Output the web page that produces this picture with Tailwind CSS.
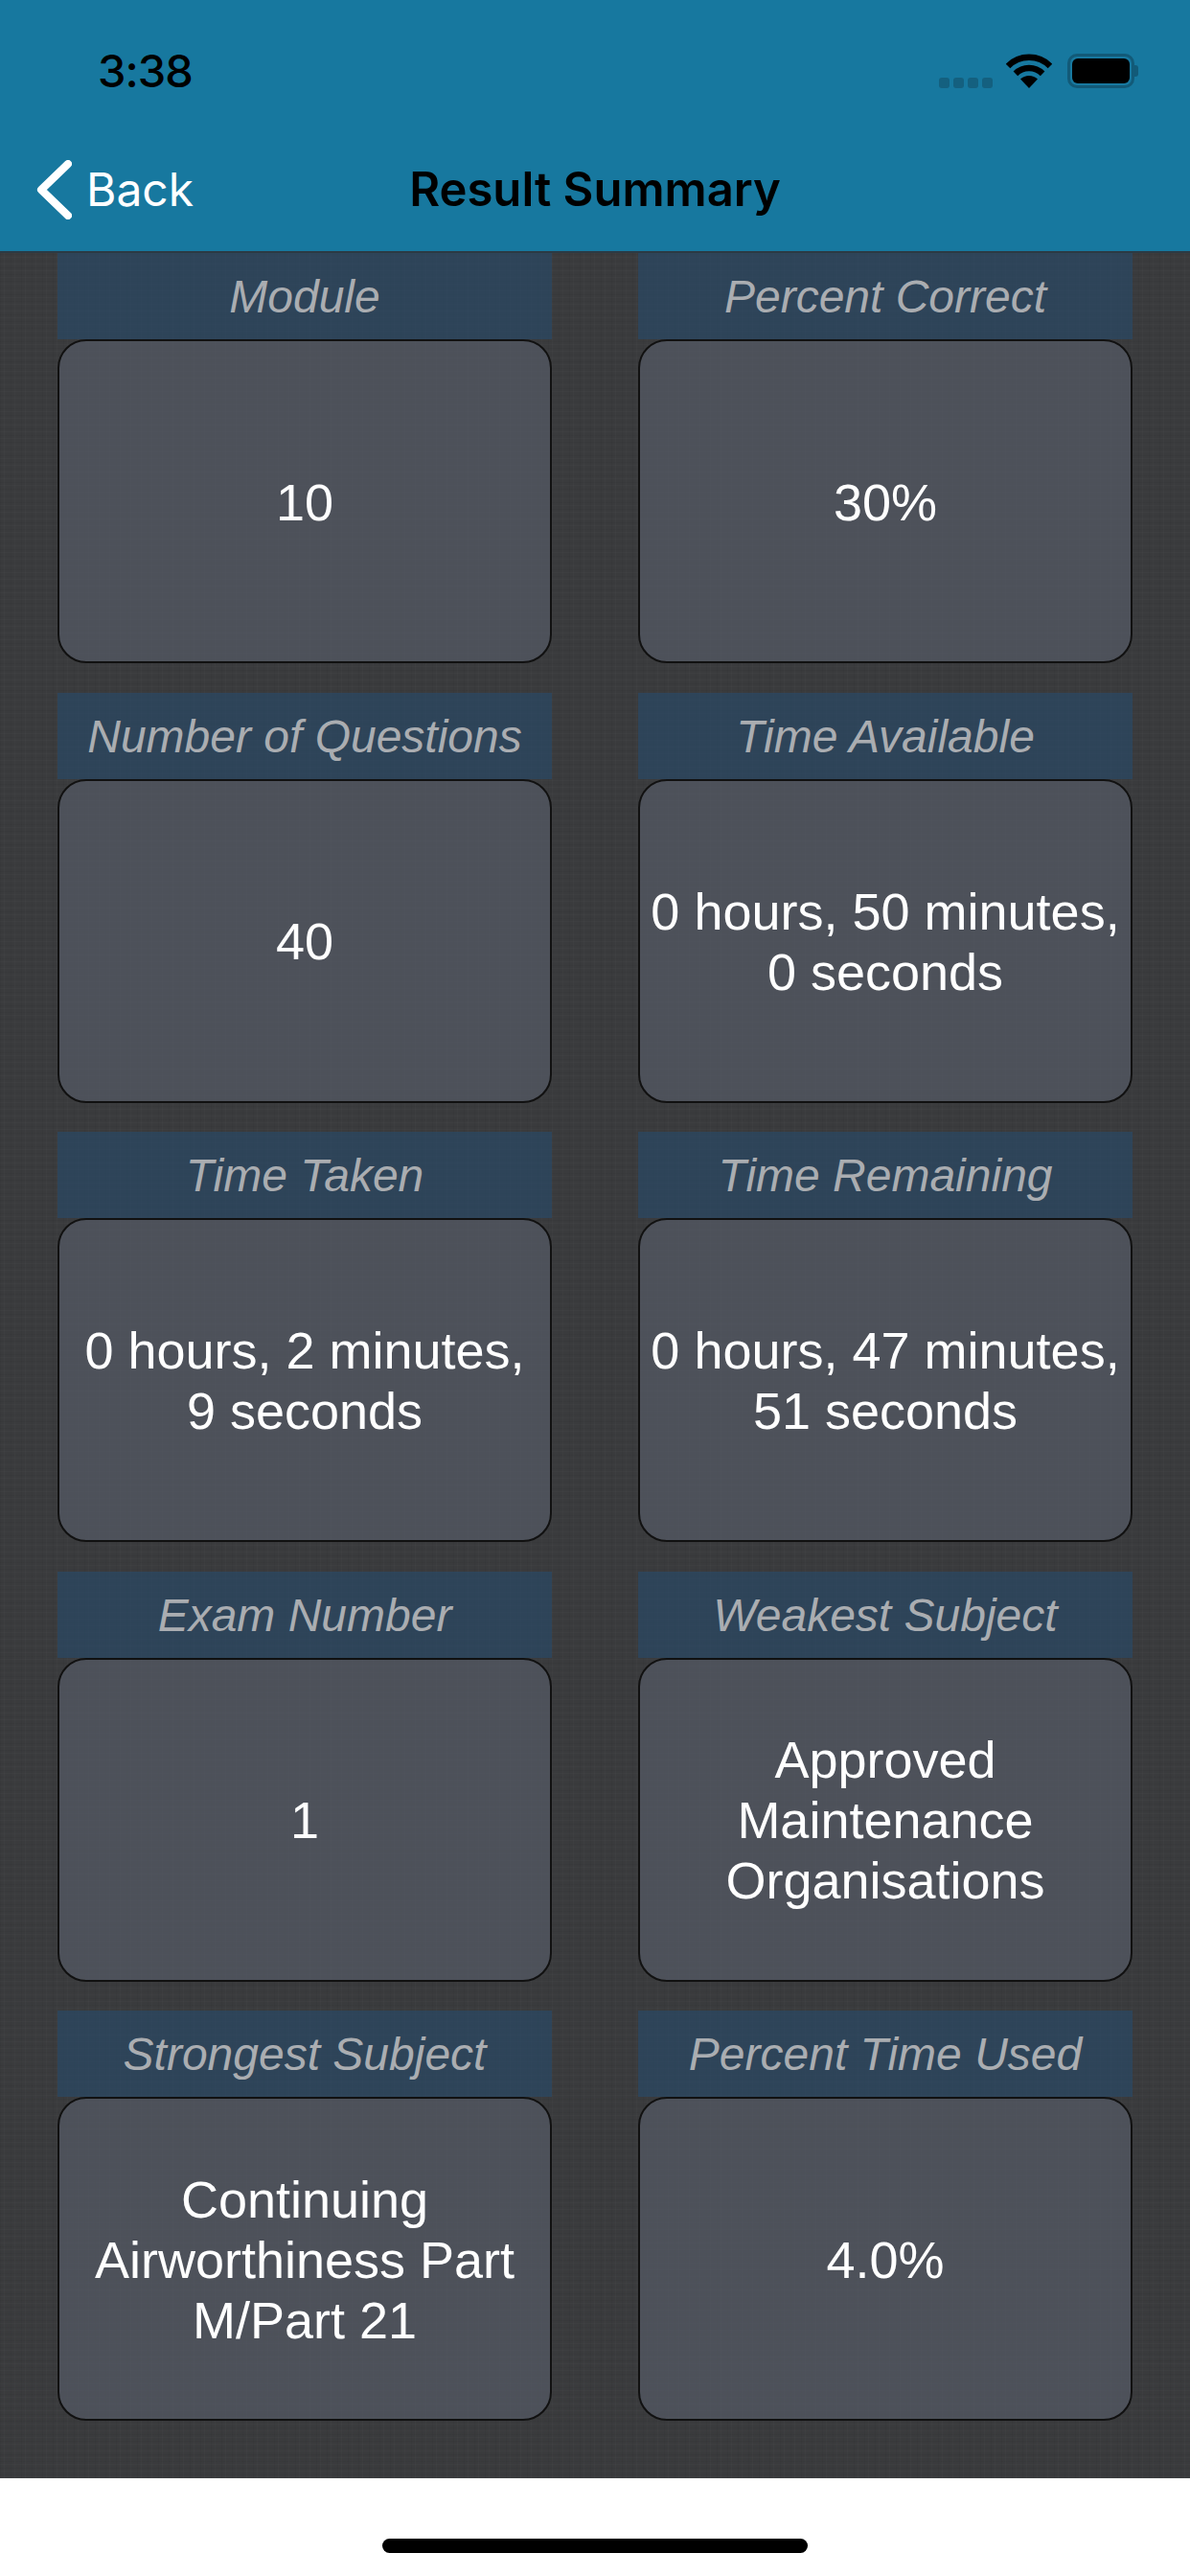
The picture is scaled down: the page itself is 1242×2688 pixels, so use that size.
<!DOCTYPE html>
<html lang="en">
<head>
    <meta charset="UTF-8">
    <meta name="viewport" content="width=device-width, initial-scale=1.0">
    <title>Result Summary</title>
    <script src="https://cdn.jsdelivr.net/npm/@tailwindcss/browser@4"></script>
</head>
<body class="w-[1242px] h-[2688px] flex flex-col bg-white overflow-hidden font-['Liberation_Sans',sans-serif]">
    <!-- Status bar + nav -->
    <header class="h-[264px] shrink-0 bg-[#17789f] border-b-2 border-[#2b3a44] flex flex-col">
        <div class="h-[163px] shrink-0 flex items-start justify-between pt-[50px] pl-[102px] pr-[54px]">
            <span class="text-[47px] leading-[48px] font-medium tracking-[-1px] text-black font-['Inter',sans-serif]">3:38</span>
            <div class="flex items-end mt-[6px]">
                <div class="flex gap-[4px] mr-[14px]">
                    <span class="w-[11px] h-[11px] rounded-[3px] bg-[#14607f]"></span>
                    <span class="w-[11px] h-[11px] rounded-[3px] bg-[#14607f]"></span>
                    <span class="w-[11px] h-[11px] rounded-[3px] bg-[#14607f]"></span>
                    <span class="w-[11px] h-[11px] rounded-[3px] bg-[#14607f]"></span>
                </div>
                <svg class="w-[48px] h-[36px] mr-[16px]" viewBox="0 0 48 36" fill="none" stroke="#000">
                    <path d="M2 13A31 31 0 0 1 46 13" stroke-width="6.5"/>
                    <path d="M9.9 20.9A20 20 0 0 1 38.1 20.9" stroke-width="6.5"/>
                    <path d="M24 36L15 26.5A13 13 0 0 1 33 26.5Z" fill="#000" stroke="none"/>
                </svg>
                <div class="flex items-center">
                    <div class="w-[70px] h-[36px] rounded-[10px] border-[3px] border-[#125a78] p-[2px]">
                        <div class="w-full h-full rounded-[6px] bg-black"></div>
                    </div>
                    <span class="w-[4px] h-[12px] rounded-r-[3px] bg-[#125a78]"></span>
                </div>
            </div>
        </div>
        <div class="grid grid-cols-[1fr_auto_1fr] items-center h-[70px]">
            <div class="flex items-center gap-[15px] pl-[38px] text-white">
                <svg class="w-[37px] h-[62px]" viewBox="0 0 37 62" fill="none" stroke="#fff" stroke-width="8" stroke-linecap="round" stroke-linejoin="round">
                    <path d="M33 4L5 31L33 58"/>
                </svg>
                <span class="text-[48px] leading-[60px] font-['Inter',sans-serif]">Back</span>
            </div>
            <h1 class="text-[49px] leading-[60px] font-semibold text-black font-['Inter',sans-serif]">Result Summary</h1>
            <div></div>
        </div>
    </header>

    <!-- Results grid -->
    <main class="h-[2322px] shrink-0 bg-[#3a3b3d] bg-[repeating-linear-gradient(0deg,rgba(255,255,255,0.015)_0_1px,transparent_1px_3px,rgba(0,0,0,0.03)_3px_4px,transparent_4px_7px),repeating-linear-gradient(90deg,rgba(0,0,0,0.04)_0_1px,transparent_1px_4px,rgba(255,255,255,0.015)_4px_5px,transparent_5px_11px)] px-[60px]">
        <div class="grid grid-cols-[516px_516px] gap-x-[90px] gap-y-[30.5px]">
            <section>
                <h2 class="h-[90px] pt-[2px] flex items-center justify-center bg-[#2a4865]/70 text-[#aaadb1] text-[48px] font-light italic">Module</h2>
                <div class="h-[338px] pt-[2px] flex items-center justify-center text-center text-white text-[54px] leading-[63px] bg-[#525762]/80 border-2 border-[#111] rounded-[30px]">10</div>
            </section>
            <section>
                <h2 class="h-[90px] pt-[2px] flex items-center justify-center bg-[#2a4865]/70 text-[#aaadb1] text-[48px] font-light italic">Percent Correct</h2>
                <div class="h-[338px] pt-[2px] flex items-center justify-center text-center text-white text-[54px] leading-[63px] bg-[#525762]/80 border-2 border-[#111] rounded-[30px]">30%</div>
            </section>
            <section>
                <h2 class="h-[90px] pt-[2px] flex items-center justify-center bg-[#2a4865]/70 text-[#aaadb1] text-[48px] font-light italic">Number of Questions</h2>
                <div class="h-[338px] pt-[2px] flex items-center justify-center text-center text-white text-[54px] leading-[63px] bg-[#525762]/80 border-2 border-[#111] rounded-[30px]">40</div>
            </section>
            <section>
                <h2 class="h-[90px] pt-[2px] flex items-center justify-center bg-[#2a4865]/70 text-[#aaadb1] text-[48px] font-light italic">Time Available</h2>
                <div class="h-[338px] pt-[2px] flex items-center justify-center text-center text-white text-[54px] leading-[63px] bg-[#525762]/80 border-2 border-[#111] rounded-[30px]">0 hours, 50 minutes,<br>0 seconds</div>
            </section>
            <section>
                <h2 class="h-[90px] pt-[2px] flex items-center justify-center bg-[#2a4865]/70 text-[#aaadb1] text-[48px] font-light italic">Time Taken</h2>
                <div class="h-[338px] pt-[2px] flex items-center justify-center text-center text-white text-[54px] leading-[63px] bg-[#525762]/80 border-2 border-[#111] rounded-[30px]">0 hours, 2 minutes,<br>9 seconds</div>
            </section>
            <section>
                <h2 class="h-[90px] pt-[2px] flex items-center justify-center bg-[#2a4865]/70 text-[#aaadb1] text-[48px] font-light italic">Time Remaining</h2>
                <div class="h-[338px] pt-[2px] flex items-center justify-center text-center text-white text-[54px] leading-[63px] bg-[#525762]/80 border-2 border-[#111] rounded-[30px]">0 hours, 47 minutes,<br>51 seconds</div>
            </section>
            <section>
                <h2 class="h-[90px] pt-[2px] flex items-center justify-center bg-[#2a4865]/70 text-[#aaadb1] text-[48px] font-light italic">Exam Number</h2>
                <div class="h-[338px] pt-[2px] flex items-center justify-center text-center text-white text-[54px] leading-[63px] bg-[#525762]/80 border-2 border-[#111] rounded-[30px]">1</div>
            </section>
            <section>
                <h2 class="h-[90px] pt-[2px] flex items-center justify-center bg-[#2a4865]/70 text-[#aaadb1] text-[48px] font-light italic">Weakest Subject</h2>
                <div class="h-[338px] pt-[2px] flex items-center justify-center text-center text-white text-[54px] leading-[63px] bg-[#525762]/80 border-2 border-[#111] rounded-[30px]">Approved<br>Maintenance<br>Organisations</div>
            </section>
            <section>
                <h2 class="h-[90px] pt-[2px] flex items-center justify-center bg-[#2a4865]/70 text-[#aaadb1] text-[48px] font-light italic">Strongest Subject</h2>
                <div class="h-[338px] pt-[2px] flex items-center justify-center text-center text-white text-[54px] leading-[63px] bg-[#525762]/80 border-2 border-[#111] rounded-[30px]">Continuing<br>Airworthiness Part<br>M/Part 21</div>
            </section>
            <section>
                <h2 class="h-[90px] pt-[2px] flex items-center justify-center bg-[#2a4865]/70 text-[#aaadb1] text-[48px] font-light italic">Percent Time Used</h2>
                <div class="h-[338px] pt-[2px] flex items-center justify-center text-center text-white text-[54px] leading-[63px] bg-[#525762]/80 border-2 border-[#111] rounded-[30px]">4.0%</div>
            </section>
        </div>
    </main>

    <!-- Home indicator -->
    <footer class="flex-1 flex justify-center pt-[63px]">
        <span class="w-[444px] h-[15px] rounded-full bg-black"></span>
    </footer>
</body>
</html>
